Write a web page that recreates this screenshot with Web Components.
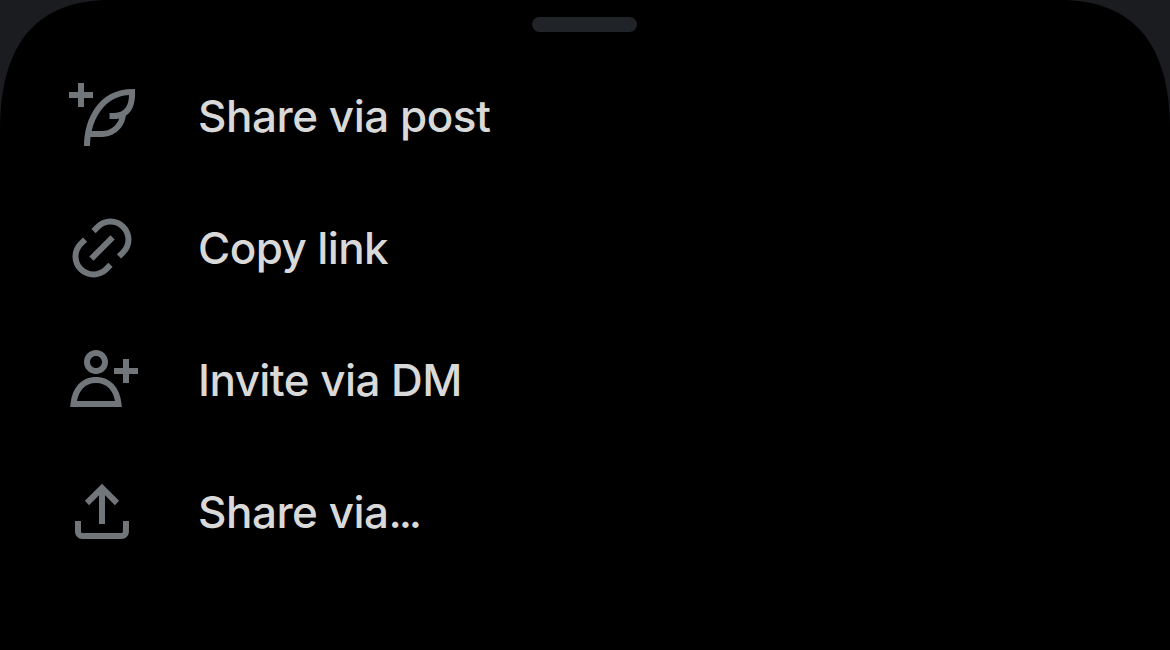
<!DOCTYPE html>
<html lang="en">
<head>
<meta charset="UTF-8">
<title>Share</title>
<style>
    body {
        margin: 0;
        background: #1b1c20;
        overflow: hidden;
    }

    .dots {
        letter-spacing: -3.2px;
    }
</style>
</head>
<body>
<share-sheet>
    <share-item icon="post" style="--tracking: -0.47px">Share via post</share-item>
    <share-item icon="link" style="--tracking: -0.6px">Copy link</share-item>
    <share-item icon="invite" style="--tracking: -0.57px">Invite via DM</share-item>
    <share-item icon="upload" style="--tracking: -0.5px">Share via<span class="dots">...</span></share-item>
</share-sheet>

<script>
const ICONS = {
    post: 'M23 3c-6.62-.1-10.38 2.421-13.05 6.03C7.29 12.61 6 17.331 6 22h2c0-1.007.07-2.012.19-3H12c4.1 0 7.48-3.082 7.94-7.054C22.79 10.147 23.17 6.359 23 3zm-7 8h-1.5v2H16c.63-.016 1.2-.08 1.72-.188C16.95 15.24 14.68 17 12 17H8.55c.57-2.512 1.57-4.851 3-6.78 2.16-2.912 5.29-4.911 9.45-5.187C20.95 8.079 19.9 11 16 11zM4 9V6H1V4h3V1h2v3h3v2H6v3H4z',
    link: 'M18.36 5.64c-1.95-1.96-5.11-1.96-7.07 0L9.88 7.05 8.46 5.64l1.42-1.42c2.73-2.73 7.16-2.73 9.9 0 2.73 2.74 2.73 7.17 0 9.9l-1.42 1.42-1.41-1.42 1.41-1.41c1.96-1.96 1.96-5.12 0-7.07zm-2.12 3.53l-7.07 7.07-1.41-1.41 7.07-7.07 1.41 1.41zm-12.02.71l1.42-1.42 1.41 1.42-1.41 1.41c-1.96 1.96-1.96 5.12 0 7.07 1.95 1.96 5.11 1.96 7.07 0l1.41-1.41 1.42 1.41-1.42 1.42c-2.73 2.73-7.16 2.73-9.9 0-2.73-2.74-2.73-7.17 0-9.9z',
    invite: 'M10 4c-1.105 0-2 .9-2 2s.895 2 2 2 2-.9 2-2-.895-2-2-2zM6 6c0-2.21 1.791-4 4-4s4 1.79 4 4-1.791 4-4 4-4-1.79-4-4zm13 4v3h2v-3h3V8h-3V5h-2v3h-3v2h3zM3.651 19h12.698c-.337-1.8-1.023-3.21-1.945-4.19C13.318 13.65 11.838 13 10 13s-3.317.65-4.404 1.81c-.922.98-1.608 2.39-1.945 4.19zm.486-5.56C5.627 11.85 7.648 11 10 11s4.373.85 5.863 2.44c1.477 1.58 2.366 3.8 2.632 6.46l.11 1.1H1.395l.11-1.1c.266-2.66 1.155-4.88 2.632-6.46z',
    upload: 'M12 2.59l5.7 5.7-1.41 1.42L13 6.41V16h-2V6.41l-3.3 3.3-1.41-1.42L12 2.59zM21 15l-.02 3.51c0 1.38-1.12 2.49-2.5 2.49H5.5C4.11 21 3 19.88 3 18.5V15h2v3.5c0 .28.22.5.5.5h12.98c.28 0 .5-.22.5-.5L19 15h2z'
};

class ShareSheet extends HTMLElement {
    connectedCallback() {
        this.attachShadow({ mode: 'open' });
        this.shadowRoot.innerHTML = `
            <style>
                :host {
                    display: flex;
                    flex-direction: column;
                    box-sizing: border-box;
                    width: 1170px;
                    height: 650px;
                    padding-top: 17px;
                    background: #000;
                    color: #d9d9d9;
                    font-family: Inter, "Liberation Sans", sans-serif;
                    /* smooth corners, a plain border-radius is too round */
                    clip-path: path('M0 130C0 40 40 0 110 0H1060C1130 0 1170 40 1170 130V650H0Z');
                }

                .handle {
                    flex: none;
                    align-self: center;
                    width: 105px;
                    height: 15px;
                    margin: 0 1px 18px 0;
                    border-radius: 8px;
                    background: #202327;
                }

                .list {
                    display: flex;
                    flex-direction: column;
                }
            </style>

            <div class="handle"></div>
            <div class="list"><slot></slot></div>
        `;
    }
}

class ShareItem extends HTMLElement {
    connectedCallback() {
        this.attachShadow({ mode: 'open' });
        this.shadowRoot.innerHTML = `
            <style>
                :host {
                    display: flex;
                    align-items: center;
                    gap: 60px;
                    height: 132px;
                    padding-left: 66px;
                    font-size: 44px;
                    font-weight: 500;
                    line-height: 1;
                    letter-spacing: var(--tracking, 0);
                    white-space: nowrap;
                }

                svg {
                    flex: none;
                    width: 72px;
                    height: 72px;
                    fill: #71767b;
                }
            </style>

            <svg viewBox="0 0 24 24"><path d="${ICONS[this.getAttribute('icon')]}"/></svg>
            <span><slot></slot></span>
        `;
    }
}

customElements.define('share-sheet', ShareSheet);
customElements.define('share-item', ShareItem);
</script>
</body>
</html>
